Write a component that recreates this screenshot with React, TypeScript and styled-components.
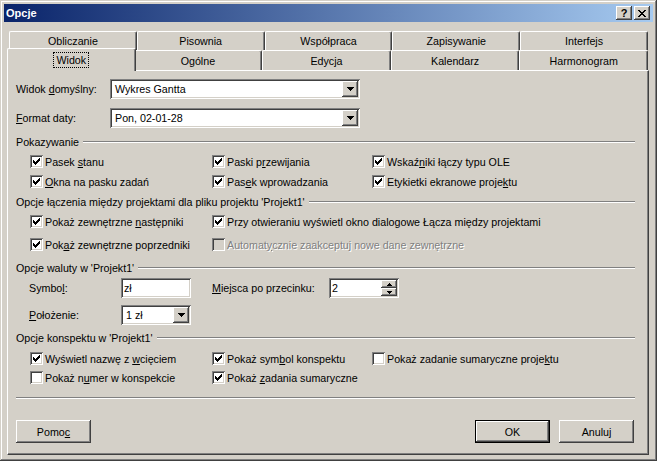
import React from "react";
import styled, { createGlobalStyle, css } from "styled-components";

const GlobalStyle = createGlobalStyle`
  html, body { margin: 0; padding: 0; background: #d4d0c8; }
  body { font-family: "Liberation Sans", Arial, sans-serif; font-size: 10.7px; color: #000; }
  * { box-sizing: border-box; }
`;

const raised = css`
  box-shadow: inset -1px -1px #404040, inset 1px 1px #fff, inset -2px -2px #808080, inset 2px 2px #d4d0c8;
`;
const sunken = css`
  box-shadow: inset 1px 1px #808080, inset -1px -1px #fff, inset 2px 2px #404040, inset -2px -2px #d4d0c8;
`;

const Window = styled.div`
  width: 657px;
  height: 461px;
  padding: 4px;
  background: #d4d0c8;
  box-shadow: inset -1px -1px #404040, inset 1px 1px #d4d0c8, inset -2px -2px #808080, inset 2px 2px #fff;
  display: flex;
  flex-direction: column;
`;

const TitleBar = styled.div`
  height: 18px;
  flex: none;
  display: flex;
  align-items: center;
  padding: 0 3px 0 2px;
  background: linear-gradient(to right, #0a246a, #a6caf0);
  color: #fff;
  font-weight: bold;
  font-size: 11px;
`;

const Title = styled.span`
  flex: 1;
`;

const CaptionButton = styled.span`
  width: 16px;
  height: 14px;
  margin-left: 2px;
  background: #d4d0c8;
  color: #000;
  ${raised};
  display: flex;
  align-items: center;
  justify-content: center;
  font-size: 11px;
  font-weight: bold;
  line-height: 1;
`;

const Body = styled.div`
  flex: 1;
  display: flex;
  flex-direction: column;
  padding: 9px 4px 2px 3px;
`;

const TabRow = styled.div<{ $h: number }>`
  display: flex;
  flex: none;
  height: ${(p) => p.$h}px;
  margin: 0 1px 0 2px;
`;

const Tab = styled.div<{ $selected?: boolean }>`
  flex: 1 1 0;
  display: flex;
  align-items: center;
  justify-content: center;
  background: #d4d0c8;
  border-top: 1px solid #fff;
  border-left: 1px solid #fff;
  border-right: 1px solid #404040;
  border-radius: 2px 2px 0 0;
  box-shadow: inset -1px 0 #808080;
  white-space: nowrap;
  ${(p) =>
    p.$selected &&
    css`
      position: relative;
      z-index: 1;
      margin: -2px -2px -1px;
      padding-bottom: 1px;
    `}
`;

const FocusText = styled.span`
  outline: 1px dotted #000;
  outline-offset: 1px;
  padding: 0 1px;
`;

const Panel = styled.div`
  flex: 1;
  background: #d4d0c8;
  border-top: 1px solid #fff;
  border-left: 1px solid #fff;
  border-right: 1px solid #404040;
  border-bottom: 1px solid #404040;
  box-shadow: inset -1px -1px #808080;
  padding: 8px 13px 0 8px;
  display: flex;
  flex-direction: column;
`;

const FieldRow = styled.div<{ $mt?: number; $pl?: number }>`
  display: flex;
  align-items: center;
  height: 20px;
  flex: none;
  margin-top: ${(p) => p.$mt ?? 0}px;
  padding-left: ${(p) => p.$pl ?? 0}px;
`;

const FieldLabel = styled.label<{ $w: number; $ml?: number }>`
  width: ${(p) => p.$w}px;
  margin-left: ${(p) => p.$ml ?? 0}px;
  flex: none;
  white-space: nowrap;
`;

const Combo = styled.div<{ $w: number }>`
  width: ${(p) => p.$w}px;
  height: 20px;
  background: #fff;
  ${sunken};
  display: flex;
  align-items: center;
  padding: 2px;
  flex: none;
`;

const FieldText = styled.span<{ $pl: number }>`
  flex: 1;
  padding-left: ${(p) => p.$pl}px;
  white-space: nowrap;
`;

const DropButton = styled.span`
  width: 16px;
  align-self: stretch;
  background: #d4d0c8;
  ${raised};
  display: flex;
  align-items: center;
  justify-content: center;
`;

const SpinColumn = styled.span`
  width: 16px;
  align-self: stretch;
  display: flex;
  flex-direction: column;
`;

const SpinButton = styled.span`
  flex: 1;
  background: #d4d0c8;
  ${raised};
  display: flex;
  align-items: center;
  justify-content: center;
`;

const GroupHeader = styled.div<{ $mt: number }>`
  display: flex;
  align-items: center;
  gap: 4px;
  height: 13px;
  flex: none;
  margin-top: ${(p) => p.$mt}px;
  white-space: nowrap;
`;

const GroupLine = styled.div`
  flex: 1;
  height: 2px;
  border-top: 1px solid #808080;
  border-bottom: 1px solid #fff;
`;

const CheckGrid = styled.div<{ $cols: string; $gap: number; $mt: number }>`
  display: grid;
  grid-template-columns: ${(p) => p.$cols};
  grid-auto-rows: 15px;
  row-gap: ${(p) => p.$gap}px;
  margin-top: ${(p) => p.$mt}px;
  padding-left: 14px;
  flex: none;
`;

const CheckItem = styled.label<{ $disabled?: boolean }>`
  display: flex;
  align-items: center;
  gap: 2px;
  white-space: nowrap;
  ${(p) =>
    p.$disabled &&
    css`
      color: #808080;
      text-shadow: 1px 1px 0 #fff;
    `}
`;

const CheckBox = styled.span<{ $disabled?: boolean }>`
  width: 13px;
  height: 13px;
  flex: none;
  background: ${(p) => (p.$disabled ? "#d4d0c8" : "#fff")};
  ${sunken};
  display: flex;
  align-items: center;
  justify-content: center;
`;

const U = styled.span`
  text-decoration: underline;
`;

const Separator = styled.div`
  height: 2px;
  flex: none;
  margin-top: 12px;
  border-top: 1px solid #808080;
  border-bottom: 1px solid #fff;
`;

const ButtonRow = styled.div`
  display: flex;
  gap: 9px;
  margin-top: 21px;
  padding-right: 1px;
  flex: none;
`;

const PushButton = styled.button<{ $default?: boolean; $push?: boolean }>`
  width: 75px;
  height: 23px;
  padding: 0;
  border: 0;
  font: inherit;
  color: #000;
  background: #d4d0c8;
  ${raised};
  ${(p) =>
    p.$default &&
    css`
      box-shadow: inset 0 0 0 1px #000, inset -2px -2px #404040, inset 2px 2px #fff, inset -3px -3px #808080;
    `}
  ${(p) =>
    p.$push &&
    css`
      margin-right: auto;
    `}
`;

const CheckMark = () => (
  <svg width="7" height="7" viewBox="0 0 7 7" shapeRendering="crispEdges">
    <path
      fill="#000"
      d="M0 2h1v3h-1z M1 3h1v3h-1z M2 4h1v3h-1z M3 3h1v3h-1z M4 2h1v3h-1z M5 1h1v3h-1z M6 0h1v3h-1z"
    />
  </svg>
);

const DownArrow = () => (
  <svg width="7" height="4" viewBox="0 0 7 4" shapeRendering="crispEdges">
    <path fill="#000" d="M0 0h7v1h-7z M1 1h5v1h-5z M2 2h3v1h-3z M3 3h1v1h-1z" />
  </svg>
);

const SmallArrow = ({ up }: { up?: boolean }) => (
  <svg width="5" height="3" viewBox="0 0 5 3" shapeRendering="crispEdges">
    <path fill="#000" d={up ? "M2 0h1v1h-1z M1 1h3v1h-3z M0 2h5v1h-5z" : "M0 0h5v1h-5z M1 1h3v1h-3z M2 2h1v1h-1z"} />
  </svg>
);

const CloseGlyph = () => (
  <svg width="8" height="7" viewBox="0 0 8 7" shapeRendering="crispEdges">
    <path
      fill="#000"
      d="M0 0h2v1h-2z M6 0h2v1h-2z M1 1h2v1h-2z M5 1h2v1h-2z M2 2h4v1h-4z M3 3h2v1h-2z M2 4h4v1h-4z M1 5h2v1h-2z M5 5h2v1h-2z M0 6h2v1h-2z M6 6h2v1h-2z"
    />
  </svg>
);

type Check = { label: React.ReactNode; checked: boolean; disabled?: boolean };

const CheckOption = ({ label, checked, disabled }: Check) => (
  <CheckItem $disabled={disabled}>
    <CheckBox $disabled={disabled}>{checked && <CheckMark />}</CheckBox>
    <span>{label}</span>
  </CheckItem>
);

const row1Tabs = ["Obliczanie", "Pisownia", "Współpraca", "Zapisywanie", "Interfejs"];
const row2Tabs = ["Widok", "Ogólne", "Edycja", "Kalendarz", "Harmonogram"];

const display: Check[] = [
  { label: <>Pasek <U>s</U>tanu</>, checked: true },
  { label: <>Paski p<U>r</U>zewijania</>, checked: true },
  { label: <>Wskaź<U>n</U>iki łączy typu OLE</>, checked: true },
  { label: <><U>O</U>kna na pasku zadań</>, checked: true },
  { label: <>Pas<U>e</U>k wprowadzania</>, checked: true },
  { label: <>Etykietki ekranowe proje<U>k</U>tu</>, checked: true },
];

const linking: Check[] = [
  { label: <>Pokaż zewnętrzne <U>n</U>astępniki</>, checked: true },
  { label: <>Przy otwieraniu wyświetl okno dialogowe Łącza między projektami</>, checked: true },
  { label: <>Pok<U>a</U>ż zewnętrzne poprzedniki</>, checked: true },
  { label: <>Automat<U>y</U>cznie zaakceptuj nowe dane zewnętrzne</>, checked: false, disabled: true },
];

const outline: Check[] = [
  { label: <>Wyświetl nazwę z <U>w</U>cięciem</>, checked: true },
  { label: <>Pokaż sym<U>b</U>ol konspektu</>, checked: true },
  { label: <>Pokaż zadanie sumaryczne proje<U>k</U>tu</>, checked: false },
  { label: <>Pokaż n<U>u</U>mer w konspekcie</>, checked: false },
  { label: <>Pokaż <U>z</U>adania sumaryczne</>, checked: true },
];

export default function App() {
  return (
    <>
      <GlobalStyle />
      <Window>
        <TitleBar>
          <Title>Opcje</Title>
          <CaptionButton>?</CaptionButton>
          <CaptionButton>
            <CloseGlyph />
          </CaptionButton>
        </TitleBar>
        <Body>
          <TabRow $h={19}>
            {row1Tabs.map((t) => (
              <Tab key={t}>{t}</Tab>
            ))}
          </TabRow>
          <TabRow $h={20}>
            {row2Tabs.map((t, i) => (
              <Tab key={t} $selected={i === 0}>
                {i === 0 ? <FocusText>{t}</FocusText> : t}
              </Tab>
            ))}
          </TabRow>
          <Panel>
            <FieldRow>
              <FieldLabel $w={94}>
                Widok <U>d</U>omyślny:
              </FieldLabel>
              <Combo $w={250}>
                <FieldText $pl={3}>Wykres Gantta</FieldText>
                <DropButton>
                  <DownArrow />
                </DropButton>
              </Combo>
            </FieldRow>
            <FieldRow $mt={9}>
              <FieldLabel $w={94}>
                <U>F</U>ormat daty:
              </FieldLabel>
              <Combo $w={250}>
                <FieldText $pl={3}>Pon, 02-01-28</FieldText>
                <DropButton>
                  <DownArrow />
                </DropButton>
              </Combo>
            </FieldRow>

            <GroupHeader $mt={7}>
              Pokazywanie
              <GroupLine />
            </GroupHeader>
            <CheckGrid $cols="182px 160px 1fr" $gap={5} $mt={6}>
              {display.map((c, i) => (
                <CheckOption key={i} {...c} />
              ))}
            </CheckGrid>

            <GroupHeader $mt={6}>
              Opcje łączenia między projektami dla pliku projektu 'Projekt1'
              <GroupLine />
            </GroupHeader>
            <CheckGrid $cols="182px 1fr" $gap={8} $mt={6}>
              {linking.map((c, i) => (
                <CheckOption key={i} {...c} />
              ))}
            </CheckGrid>

            <GroupHeader $mt={9}>
              Opcje waluty w 'Projekt1'
              <GroupLine />
            </GroupHeader>
            <FieldRow $mt={4} $pl={13}>
              <FieldLabel $w={92}>
                Symbo<U>l</U>:
              </FieldLabel>
              <Combo $w={70}>
                <FieldText $pl={1}>zł</FieldText>
              </Combo>
              <FieldLabel $w={117} $ml={21}>
                <U>M</U>iejsca po przecinku:
              </FieldLabel>
              <Combo $w={70}>
                <FieldText $pl={1}>2</FieldText>
                <SpinColumn>
                  <SpinButton>
                    <SmallArrow up />
                  </SpinButton>
                  <SpinButton>
                    <SmallArrow />
                  </SpinButton>
                </SpinColumn>
              </Combo>
            </FieldRow>
            <FieldRow $mt={7} $pl={13}>
              <FieldLabel $w={92}>
                <U>P</U>ołożenie:
              </FieldLabel>
              <Combo $w={70}>
                <FieldText $pl={3}>1 zł</FieldText>
                <DropButton>
                  <DownArrow />
                </DropButton>
              </Combo>
            </FieldRow>

            <GroupHeader $mt={6}>
              Opcje konspektu w 'Projekt1'
              <GroupLine />
            </GroupHeader>
            <CheckGrid $cols="182px 160px 1fr" $gap={4} $mt={7}>
              {outline.map((c, i) => (
                <CheckOption key={i} {...c} />
              ))}
            </CheckGrid>

            <Separator />
            <ButtonRow>
              <PushButton $push>
                Pomo<U>c</U>
              </PushButton>
              <PushButton $default>OK</PushButton>
              <PushButton>Anuluj</PushButton>
            </ButtonRow>
          </Panel>
        </Body>
      </Window>
    </>
  );
}
